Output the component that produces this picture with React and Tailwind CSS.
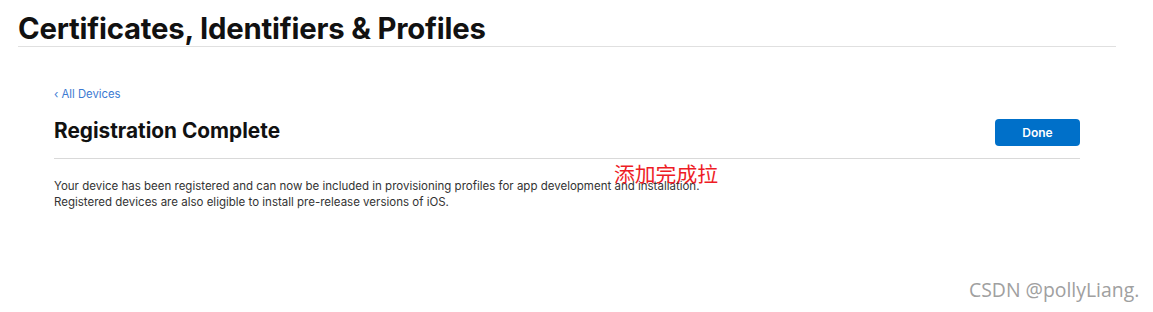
export default function App() {
  return (
    <div className="relative w-[1153px] h-[312px] bg-white overflow-hidden" style={{ fontFamily: 'Inter, "Liberation Sans", sans-serif' }}>
      <div className="ml-[18px] w-[1098px] border-b border-[#e0e0e0] pt-[14px] pb-[3px]">
        <h1 className="text-[29.3px] leading-[29px] font-bold text-[#111] tracking-[-0.2px]">Certificates, Identifiers &amp; Profiles</h1>
      </div>
      <div className="ml-[54px] w-[1026px] pt-[40px]">
        <a className="block text-[11.3px] leading-[14px] text-[#3b7ad2]">‹ All Devices</a>
        <div className="flex items-start justify-between mt-[18px] border-b border-[#d9d9d9] pb-[12px]">
          <h2 className="text-[20.8px] leading-[26px] font-bold text-[#111] mt-[-1px]">Registration Complete</h2>
          <button className="w-[85px] h-[27px] rounded-[4px] bg-[#0070c9] text-white text-[12px] font-semibold">Done</button>
        </div>
        <div className="mt-[20px] text-[11.5px] leading-[15.5px] text-[#333]">
          <p>Your device has been registered and can now be included in provisioning profiles for app development and installation.</p>
          <p>Registered devices are also eligible to install pre-release versions of iOS.</p>
        </div>
      </div>
      <div className="absolute left-[614px] top-[160px] text-[20.8px] leading-[26px] text-[#ee1c25]" style={{ fontFamily: '"Noto Sans CJK SC", sans-serif' }}>添加完成拉</div>
      <div className="absolute left-[969px] top-[278px] text-[19.4px] leading-[24px] text-[#a0a0a0]" style={{ fontFamily: '"Open Sans", sans-serif' }}>CSDN @pollyLiang.</div>
    </div>
  );
}
